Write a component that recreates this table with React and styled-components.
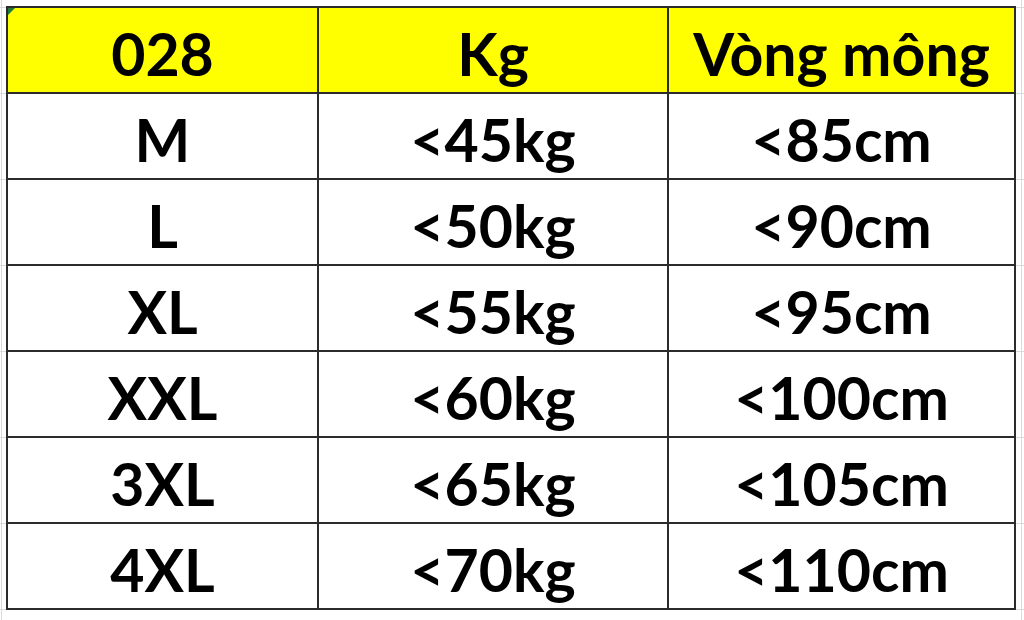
import React from "react"
import styled, { createGlobalStyle } from "styled-components"

const GlobalStyle = createGlobalStyle`
  html, body {
    margin: 0;
    padding: 0;
    background: #fff;
  }
  body {
    font-family: Lato, "Open Sans", "Liberation Sans", sans-serif;
  }
`

const rows = [
  ["M", "<45kg", "<85cm"],
  ["L", "<50kg", "<90cm"],
  ["XL", "<55kg", "<95cm"],
  ["XXL", "<60kg", "<100cm"],
  ["3XL", "<65kg", "<105cm"],
  ["4XL", "<70kg", "<110cm"],
]

// excel-ish sheet with faint gridlines around the bordered table
const Sheet = styled.div`
  width: 1024px;
  height: 620px;
  box-sizing: border-box;
  padding: 6px 0 0 6px;
  background-image:
    linear-gradient(to right, #dadada 1px, transparent 1px),
    linear-gradient(to bottom, #dadada 1px, transparent 1px);
  background-size: 1020px 100%, 100% 86px;
  background-position: 1px 0, 0 7px;
  background-repeat: repeat-x, repeat-y;
`

const Table = styled.table`
  border-collapse: collapse;
  table-layout: fixed;
  width: 1008px;
  background: #fff;
`

const Cell = styled.td`
  position: relative;
  height: 78px;
  padding: 6px 0 0 0;
  border: 2px solid #2b2b2b;
  background: ${p => (p.$head ? "#ffff00" : "#fff")};
  color: #000;
  font-size: 59px;
  font-weight: 700;
  line-height: 1;
  text-align: center;
  vertical-align: middle;
  white-space: nowrap;
`

const Marker = styled.span`
  position: absolute;
  left: 0;
  top: 0;
  width: 0;
  height: 0;
  border-top: 7px solid #1f7a35;
  border-right: 7px solid transparent;
`

export default function App() {
  return (
    <>
      <GlobalStyle />
      <Sheet>
        <Table>
          <colgroup>
            <col style={{ width: 311 }} />
            <col style={{ width: 350 }} />
            <col style={{ width: 347 }} />
          </colgroup>
          <tbody>
            <tr>
              <Cell $head>
                <Marker />
                028
              </Cell>
              <Cell $head>Kg</Cell>
              <Cell $head>Vòng mông</Cell>
            </tr>
            {rows.map(r => (
              <tr key={r[0]}>
                {r.map((v, i) => (
                  <Cell key={i}>{v}</Cell>
                ))}
              </tr>
            ))}
          </tbody>
        </Table>
      </Sheet>
    </>
  )
}
